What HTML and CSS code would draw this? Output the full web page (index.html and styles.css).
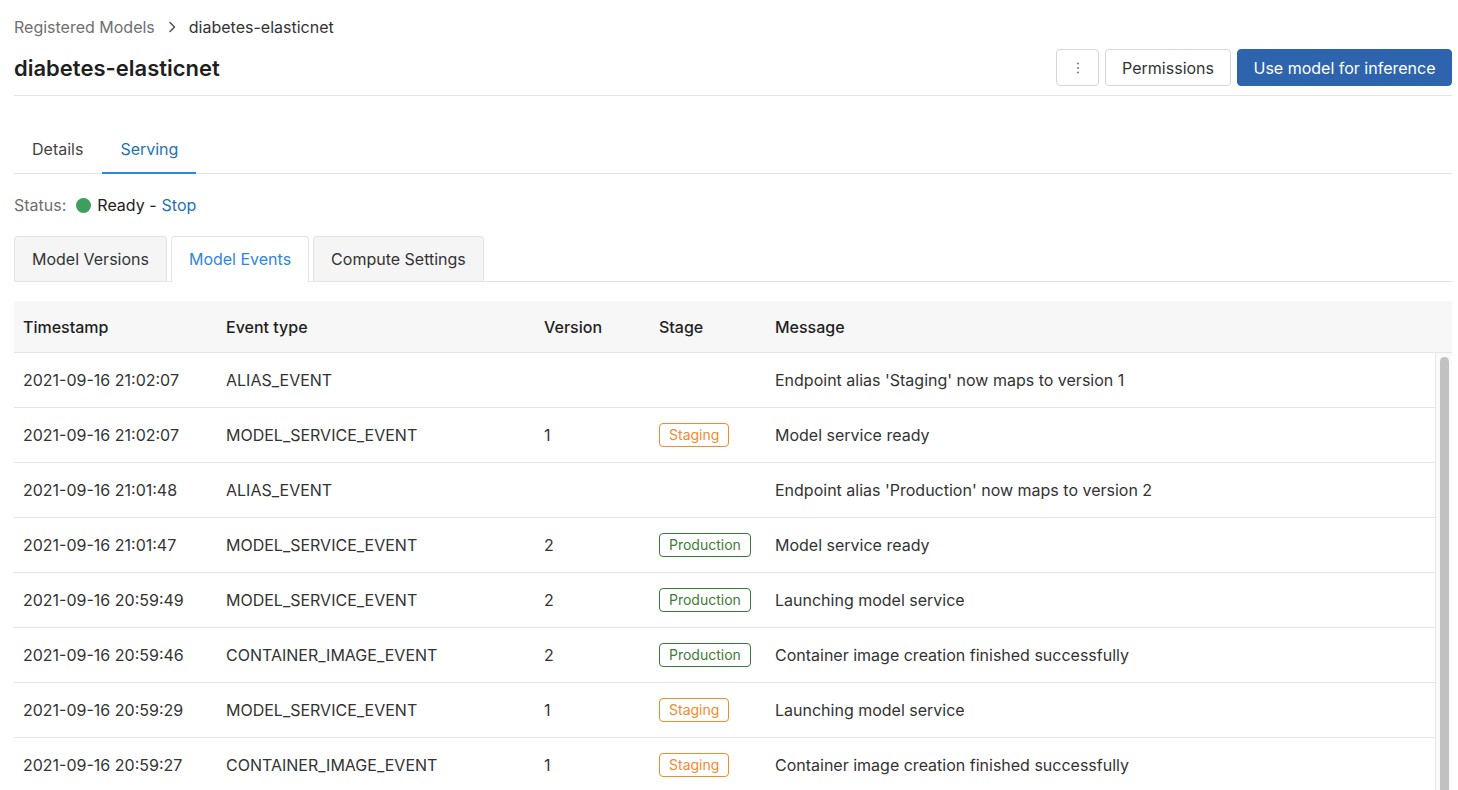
FILE: index.html
```html
<!DOCTYPE html>
<html>
<head>
<meta charset="utf-8">
<link rel="stylesheet" href="styles.css">
</head>
<body>
<div class="page">
  <nav class="breadcrumb">
    <span class="crumb-link">Registered Models</span>
    <svg class="crumb-sep" width="14" height="14" viewBox="0 0 14 14"><path d="M5 2.5 L9.5 7 L5 11.5" fill="none" stroke="#555" stroke-width="1.6" stroke-linecap="round" stroke-linejoin="round"/></svg>
    <span class="crumb-current">diabetes-elasticnet</span>
  </nav>
  <header class="title-row">
    <h1 class="title">diabetes-elasticnet</h1>
    <div class="actions">
      <button class="btn btn-icon" aria-label="More"><svg width="4" height="14" viewBox="0 0 4 14"><circle cx="2" cy="2.5" r="1" fill="#777"/><circle cx="2" cy="7" r="1" fill="#777"/><circle cx="2" cy="11.5" r="1" fill="#777"/></svg></button>
      <button class="btn">Permissions</button>
      <button class="btn btn-primary">Use model for inference</button>
    </div>
  </header>

  <div class="tabs">
    <div class="tab">Details</div>
    <div class="tab tab-active">Serving</div>
  </div>

  <div class="status">
    <span class="status-label">Status:</span>
    <span class="dot"></span>
    <span class="status-value">Ready -</span>
    <span class="link">Stop</span>
  </div>

  <div class="card-tabs">
    <div class="card-tab">Model Versions</div>
    <div class="card-tab card-tab-active">Model Events</div>
    <div class="card-tab">Compute Settings</div>
  </div>

  <div class="table">
    <div class="row head">
      <div class="c c1">Timestamp</div>
      <div class="c c2">Event type</div>
      <div class="c c3">Version</div>
      <div class="c c4">Stage</div>
      <div class="c c5">Message</div>
    </div>
    <div class="body">
      <div class="rows">
        <div class="row">
          <div class="c c1">2021-09-16 21:02:07</div>
          <div class="c c2">ALIAS_EVENT</div>
          <div class="c c3"></div>
          <div class="c c4"></div>
          <div class="c c5">Endpoint alias 'Staging' now maps to version 1</div>
        </div>
        <div class="row">
          <div class="c c1">2021-09-16 21:02:07</div>
          <div class="c c2">MODEL_SERVICE_EVENT</div>
          <div class="c c3">1</div>
          <div class="c c4"><span class="badge staging">Staging</span></div>
          <div class="c c5">Model service ready</div>
        </div>
        <div class="row">
          <div class="c c1">2021-09-16 21:01:48</div>
          <div class="c c2">ALIAS_EVENT</div>
          <div class="c c3"></div>
          <div class="c c4"></div>
          <div class="c c5">Endpoint alias 'Production' now maps to version 2</div>
        </div>
        <div class="row">
          <div class="c c1">2021-09-16 21:01:47</div>
          <div class="c c2">MODEL_SERVICE_EVENT</div>
          <div class="c c3">2</div>
          <div class="c c4"><span class="badge production">Production</span></div>
          <div class="c c5">Model service ready</div>
        </div>
        <div class="row">
          <div class="c c1">2021-09-16 20:59:49</div>
          <div class="c c2">MODEL_SERVICE_EVENT</div>
          <div class="c c3">2</div>
          <div class="c c4"><span class="badge production">Production</span></div>
          <div class="c c5">Launching model service</div>
        </div>
        <div class="row">
          <div class="c c1">2021-09-16 20:59:46</div>
          <div class="c c2">CONTAINER_IMAGE_EVENT</div>
          <div class="c c3">2</div>
          <div class="c c4"><span class="badge production">Production</span></div>
          <div class="c c5">Container image creation finished successfully</div>
        </div>
        <div class="row">
          <div class="c c1">2021-09-16 20:59:29</div>
          <div class="c c2">MODEL_SERVICE_EVENT</div>
          <div class="c c3">1</div>
          <div class="c c4"><span class="badge staging">Staging</span></div>
          <div class="c c5">Launching model service</div>
        </div>
        <div class="row last">
          <div class="c c1">2021-09-16 20:59:27</div>
          <div class="c c2">CONTAINER_IMAGE_EVENT</div>
          <div class="c c3">1</div>
          <div class="c c4"><span class="badge staging">Staging</span></div>
          <div class="c c5">Container image creation finished successfully</div>
        </div>
      </div>
      <div class="scroll-track"><div class="thumb"></div></div>
    </div>
  </div>
</div>
</body>
</html>
```

FILE: styles.css
```css
html, body {
  margin: 0;
  padding: 0;
  overflow: hidden;
  background: #fff;
}
body {
  font-family: Inter, "Liberation Sans", Arial, sans-serif;
  font-size: 16px;
  color: #333;
}
.page {
  padding: 0 6px 0 14px;
}
.breadcrumb {
  display: flex;
  align-items: center;
  padding-top: 17px;
  height: 20px;
  gap: 8px;
  font-size: 16px;
}
.crumb-link { color: #6f6f6f; }
.crumb-current { color: #333; }
.crumb-sep { margin: 0 2px; }

.title-row {
  display: flex;
  align-items: center;
  justify-content: space-between;
  margin-top: 12px;
  padding-bottom: 9px;
  border-bottom: 1px solid #e5e5e5;
}
.title {
  margin: 0;
  font-size: 22px;
  font-weight: 600;
  color: #1f1f1f;
  line-height: 28px;
}
.actions {
  display: flex;
  gap: 6px;
}
.btn {
  height: 37px;
  padding: 0 16px;
  border: 1px solid #d6d6d6;
  border-radius: 4px;
  background: #fff;
  font-family: inherit;
  font-size: 16px;
  color: #333;
  white-space: nowrap;
}
.btn-icon {
  width: 43px;
  padding: 0;
  display: flex;
  align-items: center;
  justify-content: center;
}
.btn-primary {
  background: #2e64ad;
  border-color: #2e64ad;
  color: #fff;
  width: 215px;
  padding: 0;
}

.tabs {
  display: flex;
  margin-top: 30px;
  border-bottom: 1px solid #e3e3e3;
  height: 47px;
}
.tab {
  padding: 0 18px;
  line-height: 46px;
  font-size: 16px;
  color: #444;
}
.tab-active {
  color: #2272b4;
  border-bottom: 2px solid #2d86e6;
  margin-bottom: -1px;
  margin-left: 1px;
}

.status {
  display: flex;
  align-items: center;
  height: 62px;
  font-size: 16px;
}
.status-label { color: #6f6f6f; margin-right: 10px; }
.dot {
  width: 15px;
  height: 15px;
  border-radius: 50%;
  background: #3d9f5f;
  margin-right: 6px;
}
.status-value { color: #222; margin-right: 5px; }
.link { color: #2272b4; }

.card-tabs {
  display: flex;
  gap: 4px;
  border-bottom: 1px solid #e3e3e3;
  height: 45px;
}
.card-tab {
  padding: 0 17px;
  background: #f5f5f5;
  border: 1px solid #e3e3e3;
  border-bottom: none;
  border-radius: 4px 4px 0 0;
  line-height: 44px;
  color: #333;
  font-size: 16px;
}
.card-tab-active {
  background: #fff;
  color: #2d86e6;
  margin-bottom: -1px;
  line-height: 45px;
}

.table {
  margin-top: 19px;
}
.row {
  display: flex;
  align-items: center;
  height: 54px;
  border-bottom: 1px solid #e6e6e6;
  font-size: 16px;
  color: #333;
}
.row.last { border-bottom: none; }
.row.head {
  height: 51px;
  background: #f7f7f7;
  font-weight: 500;
  color: #1f1f1f;
}
.body {
  display: flex;
  height: 440px;
  overflow: hidden;
}
.rows {
  flex: 1;
  min-width: 0;
}
.scroll-track {
  flex: none;
  width: 9px;
  padding: 4px 3px 0 4px;
  border-left: 1px solid #e8e8e8;
  background: #fafafa;
}
.thumb {
  height: 500px;
  background: #c1c1c1;
  border-radius: 5px;
}
.c { flex: none; }
.c1 { width: 203px; padding-left: 9px; }
.c2 { width: 318px; }
.c3 { width: 115px; }
.c4 { width: 116px; }
.c5 { flex: 1; }
.badge {
  display: inline-block;
  font-size: 14px;
  line-height: 22px;
  padding: 0 9px;
  border: 1px solid;
  border-radius: 4px;
}
.staging { color: #f28a2e; border-color: #f28a2e; }
.production { color: #3a7d3a; border-color: #3a7d3a; }
```
